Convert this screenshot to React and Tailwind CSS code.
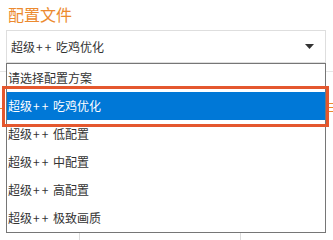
import React from "react";

const options = [
  "请选择配置方案",
  "超级++ 吃鸡优化",
  "超级++ 低配置",
  "超级++ 中配置",
  "超级++ 高配置",
  "超级++ 极致画质",
];

const Label = ({ text }) => {
  if (!text.includes("++")) return <span>{text}</span>;
  const [a, b] = text.split("++");
  return (
    <span>
      {a}
      <span className="tracking-[2px] pl-[1px]">++</span>
      {b}
    </span>
  );
};

const App = () => {
  return (
    <div
      className="relative w-[333px] h-[240px] overflow-hidden bg-white text-[#333]"
      style={{ fontFamily: '"Noto Sans CJK SC", "Noto Sans", sans-serif' }}
    >
      {/* page behind the open list */}
      <div className="h-[30px] pl-[8px] pt-[3px] text-[16px] leading-[22px] text-[#ec8a2f]">配置文件</div>
      <div className="ml-[6px] w-[320px] h-[33px] border border-[#dedede] flex items-center justify-between pl-[4px] pr-[11px] text-[12px]">
        <Label text="超级++ 吃鸡优化" />
        <svg width="9" height="5" viewBox="0 0 9 5">
          <path d="M0 0h9L4.5 5z" fill="#333" />
        </svg>
      </div>
      <div className="mt-[8px] border-t border-[#e6e6e6]" />
      <div className="mt-[31px] flex justify-between">
        <div className="mt-[5px] w-[2px] h-[1px] bg-[#ec8a2f]" />
        <div className="w-[4px] flex flex-col gap-[3px]">
          <div className="h-[1px] bg-[#ec8a2f]" />
          <div className="h-[1px] bg-[#ec8a2f]" />
          <div className="h-[1px] bg-[#ec8a2f]" />
        </div>
      </div>
      <div className="mt-[120px] ml-[79px] w-[162px] h-[20px] border border-[#dcdcdc]" />

      {/* open dropdown */}
      <div className="absolute left-[6px] top-[63px] w-[320px] border border-[#767676] bg-white text-[12px]">
        {options.map((o, i) => (
          <div
            key={o}
            className={
              i === 1
                ? "h-[28px] flex items-center pl-[1px] bg-[#0078d7] text-white"
                : "h-[28px] flex items-center pl-[1px]"
            }
          >
            <Label text={o} />
          </div>
        ))}
      </div>

      {/* annotation box */}
      <div className="absolute left-[2px] top-[86px] w-[327px] h-[41px] border-[3px] border-[#e4572e]" />
    </div>
  );
};

export default App;
